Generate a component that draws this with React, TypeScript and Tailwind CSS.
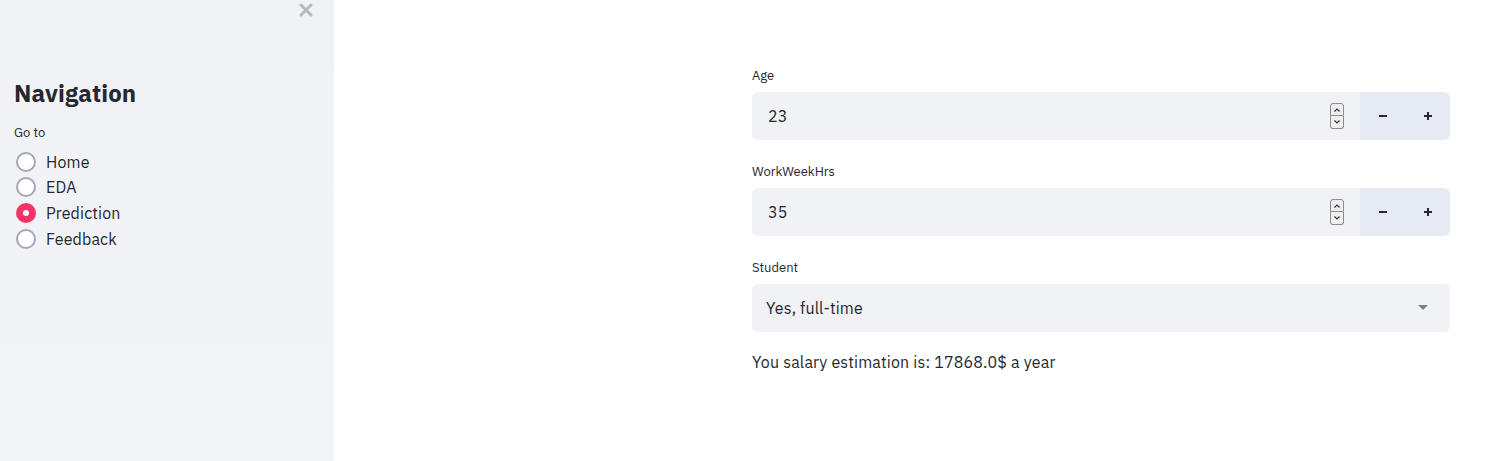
import React from "react";

const font = { fontFamily: '"IBM Plex Sans","Noto Sans","Liberation Sans",sans-serif' };

function Spinner() {
  return (
    <div className="flex flex-col w-[14px] mr-[16px]">
      <div className="h-[13px] border border-[#8d8d8d] rounded-t-[3px] bg-[#efefef] flex items-center justify-center">
        <svg width="8" height="6" viewBox="0 0 8 6"><path d="M1.5 4.5 L4 2 L6.5 4.5" stroke="#333" strokeWidth="1.2" fill="none" /></svg>
      </div>
      <div className="h-[13px] border border-t-0 border-[#8d8d8d] rounded-b-[3px] bg-[#efefef] flex items-center justify-center">
        <svg width="8" height="6" viewBox="0 0 8 6"><path d="M1.5 1.5 L4 4 L6.5 1.5" stroke="#333" strokeWidth="1.2" fill="none" /></svg>
      </div>
    </div>
  );
}

function NumberField({ label, value }: { label: string; value: string }) {
  return (
    <div className="flex flex-col">
      <div className="text-[13px] leading-[17px] text-[#262730] mb-[8px]">{label}</div>
      <div className="flex h-[48px] rounded-[6px] overflow-hidden">
        <div className="flex-1 bg-[#f0f2f6] flex items-center pl-[16px]">
          <span className="flex-1 text-[16px] text-[#262730] tracking-[0.15px]">{value}</span>
          <Spinner />
        </div>
        <div className="w-[90px] bg-[#e6eaf1] flex items-center">
          <div className="w-[45px] flex justify-center">
            <svg width="10" height="10" viewBox="0 0 10 10"><rect x="1" y="4" width="8" height="2" fill="#262730" /></svg>
          </div>
          <div className="w-[45px] flex justify-center">
            <svg width="10" height="10" viewBox="0 0 10 10"><rect x="1" y="4" width="8" height="2" fill="#262730" /><rect x="4" y="1" width="2" height="8" fill="#262730" /></svg>
          </div>
        </div>
      </div>
    </div>
  );
}

function Radio({ label, checked }: { label: string; checked?: boolean }) {
  return (
    <div className="flex items-center h-[25.67px]">
      {checked ? (
        <div className="w-[20px] h-[20px] rounded-full bg-[#f63366] flex items-center justify-center ml-[16px] mr-[10px]">
          <div className="w-[6px] h-[6px] rounded-full bg-white" />
        </div>
      ) : (
        <div className="w-[20px] h-[20px] rounded-full border-2 border-[#a3a8b4] bg-white ml-[16px] mr-[10px]" />
      )}
      <span className="text-[16px] text-[#262730] tracking-[0.15px]">{label}</span>
    </div>
  );
}

export default function App() {
  return (
    <div className="flex w-[1492px] h-[461px] bg-white" style={font}>
      <aside className="w-[334px] h-full bg-gradient-to-b from-[#f0f2f6] to-[#f3f4f7] flex flex-col relative">
        <div className="absolute left-[298px] top-[2px] text-[#b7b9bd]">
          <svg width="16" height="16" viewBox="0 0 16 16"><path d="M3 3 L13 13 M13 3 L3 13" stroke="#b7b9bd" strokeWidth="3" strokeLinecap="round" /></svg>
        </div>
        <div className="pl-[14px] pt-[77px]">
          <h1 className="text-[24px] leading-[32px] font-bold text-[#262730] tracking-[0.1px]">Navigation</h1>
        </div>
        <div className="pl-[14px] mt-[16px] text-[13px] leading-[16px] text-[#262730]">Go to</div>
        <div className="mt-[8px] flex flex-col">
          <Radio label="Home" />
          <Radio label="EDA" />
          <Radio label="Prediction" checked />
          <Radio label="Feedback" />
        </div>
      </aside>
      <main className="flex-1 pl-[418px] pr-[42px] pt-[67px]">
        <div className="flex flex-col gap-[23px]">
          <NumberField label="Age" value="23" />
          <NumberField label="WorkWeekHrs" value="35" />
          <div className="flex flex-col">
            <div className="text-[13px] leading-[17px] text-[#262730] mb-[8px]">Student</div>
            <div className="h-[48px] rounded-[6px] bg-[#f0f2f6] flex items-center pl-[14px] pr-[22px]">
              <span className="flex-1 text-[16px] text-[#262730] tracking-[0.15px]">Yes, full-time</span>
              <svg width="10" height="6" viewBox="0 0 10 6"><path d="M0 0 L10 0 L5 5 Z" fill="#7d7f8a" /></svg>
            </div>
          </div>
          <div className="text-[16px] leading-[24px] text-[#262730] mt-[-5px] tracking-[0.17px]">You salary estimation is: 17868.0$ a year</div>
        </div>
      </main>
    </div>
  );
}
